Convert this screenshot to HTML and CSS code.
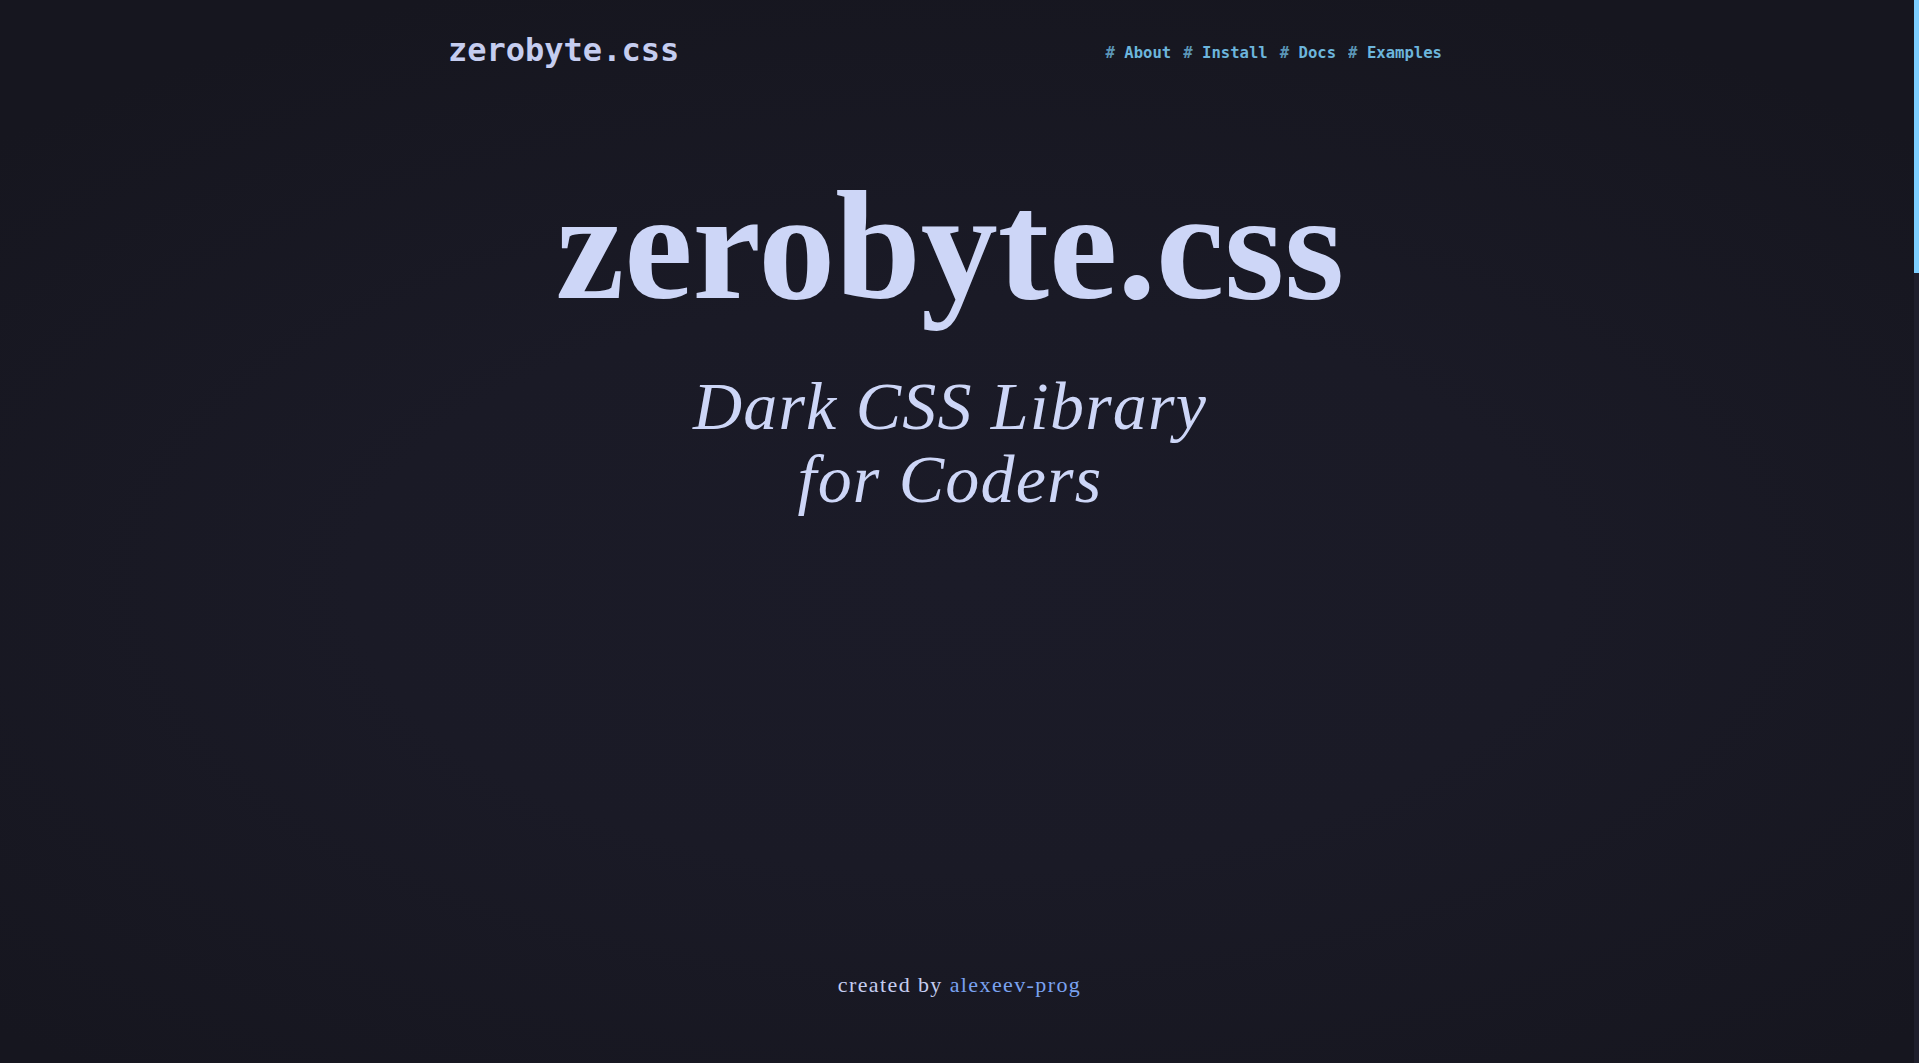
FILE: index.html
```html
<!DOCTYPE html>
<html lang="en">
<head>
<meta charset="utf-8">
<title>zerobyte.css</title>
<link rel="stylesheet" href="styles.css">
</head>
<body>
<div class="screen">
  <header class="topbar">
    <a class="logo" href="#">zerobyte.css</a>
    <nav class="nav">
      <a href="#about"><span class="hash">#</span> About</a>
      <a href="#install"><span class="hash">#</span> Install</a>
      <a href="#docs"><span class="hash">#</span> Docs</a>
      <a href="#examples"><span class="hash">#</span> Examples</a>
    </nav>
  </header>
  <section class="hero">
    <h1 class="title">zerobyte.css</h1>
    <p class="subtitle">Dark CSS Library<br>for Coders</p>
  </section>
  <footer class="credits">created by <a href="#">alexeev-prog</a></footer>
</div>
<div class="scrollbar"><div class="scrollbar-thumb"></div></div>
</body>
</html>
```
FILE: styles.css
```css
html {
  background: #181822;
}
body {
  margin: 0;
  padding-right: 5px;
  color: #cbd4f5;
  font-family: "Liberation Serif", serif;
  background: radial-gradient(ellipse 70% 60% at 50% 55%, #1b1b28 0%, #1a1a26 45%, #16161f 100%);
  overflow: hidden;
}
a {
  text-decoration: none;
  color: inherit;
}
.screen {
  height: 1063px;
  display: flex;
  flex-direction: column;
}
.topbar {
  width: 996px;
  margin: 0 auto;
  padding: 31px 26px 0 0;
  display: flex;
  justify-content: space-between;
  align-items: flex-start;
}
.logo {
  padding-left: 2px;
  font-family: "DejaVu Sans Mono", monospace;
  font-weight: bold;
  font-size: 32px;
  line-height: 38px;
  color: #c5cdf0;
}
.nav {
  display: flex;
  gap: 12px;
  margin-top: 12px;
  font-family: "DejaVu Sans Mono", monospace;
  font-size: 15.6px;
  line-height: 20px;
  font-weight: bold;
  color: #6cb5dc;
}
.hash {
  opacity: 0.8;
}
.hero {
  display: flex;
  flex-direction: column;
  align-items: center;
  margin-top: 97px;
  padding-right: 14px;
}
.title {
  margin: 0;
  font-size: 154px;
  line-height: 160px;
  font-weight: bold;
  color: #cdd6f7;
}
.subtitle {
  margin: 44px 0 0;
  font-style: italic;
  font-size: 68px;
  line-height: 73px;
  letter-spacing: 1.2px;
  text-align: center;
  color: #cdd6f7;
}
.credits {
  margin-top: auto;
  padding: 0 0 65px 5px;
  text-align: center;
  font-size: 22px;
  line-height: 26px;
  letter-spacing: 1.4px;
  color: #c5cdf0;
}
.credits a {
  color: #7aa2f0;
}
.scrollbar {
  position: fixed;
  top: 0;
  right: 0;
  width: 5px;
  height: 100%;
  background: #1f1f2c;
}
.scrollbar-thumb {
  height: 273px;
  background: #7dcfff;
}
```
